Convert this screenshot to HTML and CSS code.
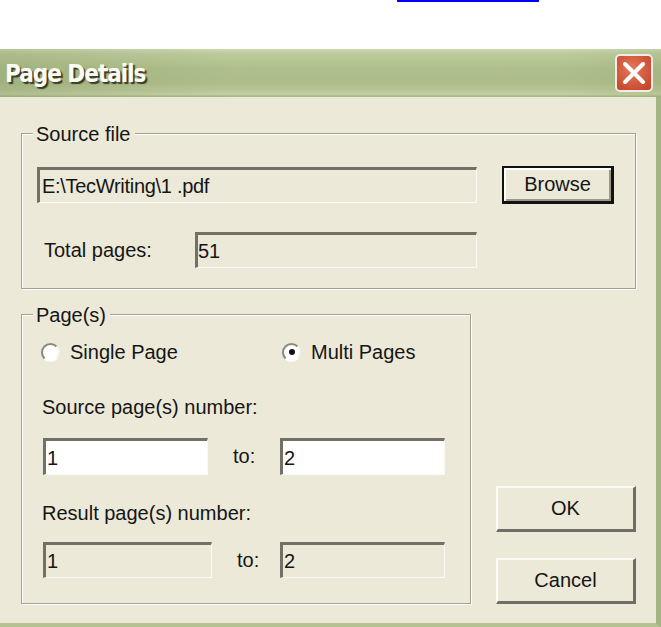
FILE: index.html
```html
<!DOCTYPE html>
<html>
<head>
<meta charset="utf-8">
<title>Page Details</title>
<link rel="stylesheet" href="styles.css">
</head>
<body>
<div class="link-line"></div>
<div class="window">
  <div class="titlebar">
    <span class="title">Page Details</span>
    <div class="close">
      <svg width="38" height="38" viewBox="0 0 38 38">
        <defs>
          <radialGradient id="cg" cx="45%" cy="40%" r="70%">
            <stop offset="0" stop-color="#e8795a"/>
            <stop offset="1" stop-color="#c2432b"/>
          </radialGradient>
        </defs>
        <rect x="1" y="1" width="36" height="36" rx="4" fill="url(#cg)" stroke="#f3ece4" stroke-width="2"/>
        <path d="M10 10 L28 28 M28 10 L10 28" stroke="#ffffff" stroke-width="4" stroke-linecap="round"/>
      </svg>
    </div>
  </div>
  <div class="client">
    <div class="group source">
      <div class="legend">Source file</div>
      <div class="row r1">
        <div class="field path">E:\TecWriting\1 .pdf</div>
        <div class="btn default">Browse</div>
      </div>
      <div class="row r2">
        <span class="label">Total pages:</span>
        <div class="field total">51</div>
      </div>
    </div>
    <div class="lower">
      <div class="group pages">
        <div class="legend">Page(s)</div>
        <div class="radios">
          <div class="opt single"><span class="radio"></span><span>Single Page</span></div>
          <div class="opt"><span class="radio on"><span class="dot"></span></span><span>Multi Pages</span></div>
        </div>
        <div class="caption cap1">Source page(s) number:</div>
        <div class="inrow src">
          <div class="field white w165">1</div>
          <span class="to t1">to:</span>
          <div class="field white w165">2</div>
        </div>
        <div class="caption cap2">Result page(s) number:</div>
        <div class="inrow res">
          <div class="field w169">1</div>
          <span class="to t2">to:</span>
          <div class="field w165">2</div>
        </div>
      </div>
      <div class="actions">
        <div class="btn push">OK</div>
        <div class="btn push">Cancel</div>
      </div>
    </div>
  </div>
</div>
</body>
</html>
```
FILE: styles.css
```css
html, body {
  margin: 0;
  padding: 0;
  background: #ffffff;
}
body {
  font-family: "Liberation Sans", Arial, sans-serif;
  font-size: 20px;
  color: #151515;
  width: 661px;
  height: 627px;
  overflow: hidden;
}
.link-line {
  margin-left: 397px;
  width: 142px;
  height: 2px;
  background: #0000fe;
}
.window {
  margin-top: 47px;
  width: 661px;
  height: 578px;
  display: flex;
  flex-direction: column;
}
.titlebar {
  flex: none;
  height: 48px;
  box-sizing: border-box;
  display: flex;
  align-items: center;
  justify-content: space-between;
  padding: 0 8px 0 5px;
  background:
    linear-gradient(90deg, rgba(110, 135, 80, 0.22) 0, rgba(110, 135, 80, 0) 35%, rgba(110, 135, 80, 0) 85%, rgba(110, 135, 80, 0.12) 100%),
    linear-gradient(180deg, #cdd8b0 0%, #bccb9c 10%, #afbf8c 40%, #adbd8a 70%, #bac79a 88%, #c4cfa2 94%, #a3b381 100%);
}
.title {
  font-family: "DejaVu Sans Condensed", "DejaVu Sans", sans-serif;
  font-weight: bold;
  font-size: 24px;
  color: #fbfbf2;
  text-shadow: 2px 2px 1px #3a3c2c;
  letter-spacing: -1px;
  margin-top: 1px;
}
.close {
  width: 38px;
  height: 38px;
  display: flex;
}
.client {
  flex: 1;
  background: #ece9d8;
  border-right: 5px solid #a3b584;
  border-bottom: 4px solid #b3c28f;
  padding: 36px 0 0 21px;
  box-sizing: border-box;
}
.group {
  box-sizing: border-box;
  border: 1px solid #a3a192;
  box-shadow: 1px 1px 0 #ffffff, inset 1px 1px 0 #ffffff;
}
.legend {
  width: fit-content;
  margin: -11px 0 0 11px;
  padding: 0 4px 0 3px;
  line-height: 22px;
  height: 22px;
  background: #ece9d8;
}
.source {
  width: 615px;
  height: 156px;
}
.row {
  display: flex;
  align-items: center;
}
.r1 {
  margin: 21px 0 0 15px;
  height: 38px;
}
.r2 {
  margin: 28px 0 0 22px;
  height: 36px;
}
.label {
  width: 151px;
}
.field {
  box-sizing: border-box;
  border-style: solid;
  border-width: 3px 1px 1px 3px;
  border-color: #737166 #fbfaf4 #fbfaf4 #737166;
  padding-left: 1px;
  display: flex;
  align-items: center;
  height: 36px;
  background: #ece9d8;
  line-height: 1;
}
.field.white {
  background: #ffffff;
  height: 37px;
}
.path { width: 440px; padding-left: 2px; letter-spacing: -0.3px; }
.total { width: 282px; padding-left: 0; }
.w165 { width: 165px; }
.w169 { width: 169px; }
.btn {
  box-sizing: border-box;
  display: flex;
  align-items: center;
  justify-content: center;
  background: #ece9d8;
}
.default {
  margin-left: 25px;
  width: 112px;
  height: 38px;
  border: 2px solid #121212;
  border-right-width: 3px;
  border-bottom-width: 3px;
  box-shadow: inset 2px 2px 0 #ffffff, inset -2px -2px 0 #9a988b;
}
.lower {
  display: flex;
  align-items: flex-end;
  margin-top: 25px;
}
.pages {
  width: 450px;
  height: 290px;
}
.radios {
  display: flex;
  align-items: center;
  height: 24px;
  margin: 14px 0 0 19px;
}
.opt {
  display: flex;
  align-items: center;
  gap: 10px;
}
.opt.single {
  width: 241px;
}
.radio {
  box-sizing: border-box;
  width: 19px;
  height: 19px;
  border-radius: 50%;
  border: 2px solid;
  border-color: #8a877b #f4f3ee #ffffff #8a877b;
  background: #ffffff;
  display: flex;
  align-items: center;
  justify-content: center;
}
.dot {
  width: 6px;
  height: 6px;
  border-radius: 50%;
  background: #111111;
}
.caption {
  line-height: 24px;
  margin-left: 20px;
}
.cap1 { margin-top: 31px; }
.cap2 { margin-top: 26px; }
.inrow {
  display: flex;
  align-items: center;
  margin-left: 21px;
}
.inrow.src { margin-top: 19px; height: 37px; }
.inrow.res { margin-top: 17px; height: 36px; }
.to {
  margin-left: 25px;
}
.t1 { width: 47px; }
.t2 { width: 43px; }
.actions {
  margin-left: 25px;
  width: 140px;
  display: flex;
  flex-direction: column;
  gap: 26px;
}
.push {
  height: 46px;
  border-style: solid;
  border-width: 2px 3px 3px 2px;
  border-color: #fbfaf5 #6f6e66 #6f6e66 #fbfaf5;
}
```
